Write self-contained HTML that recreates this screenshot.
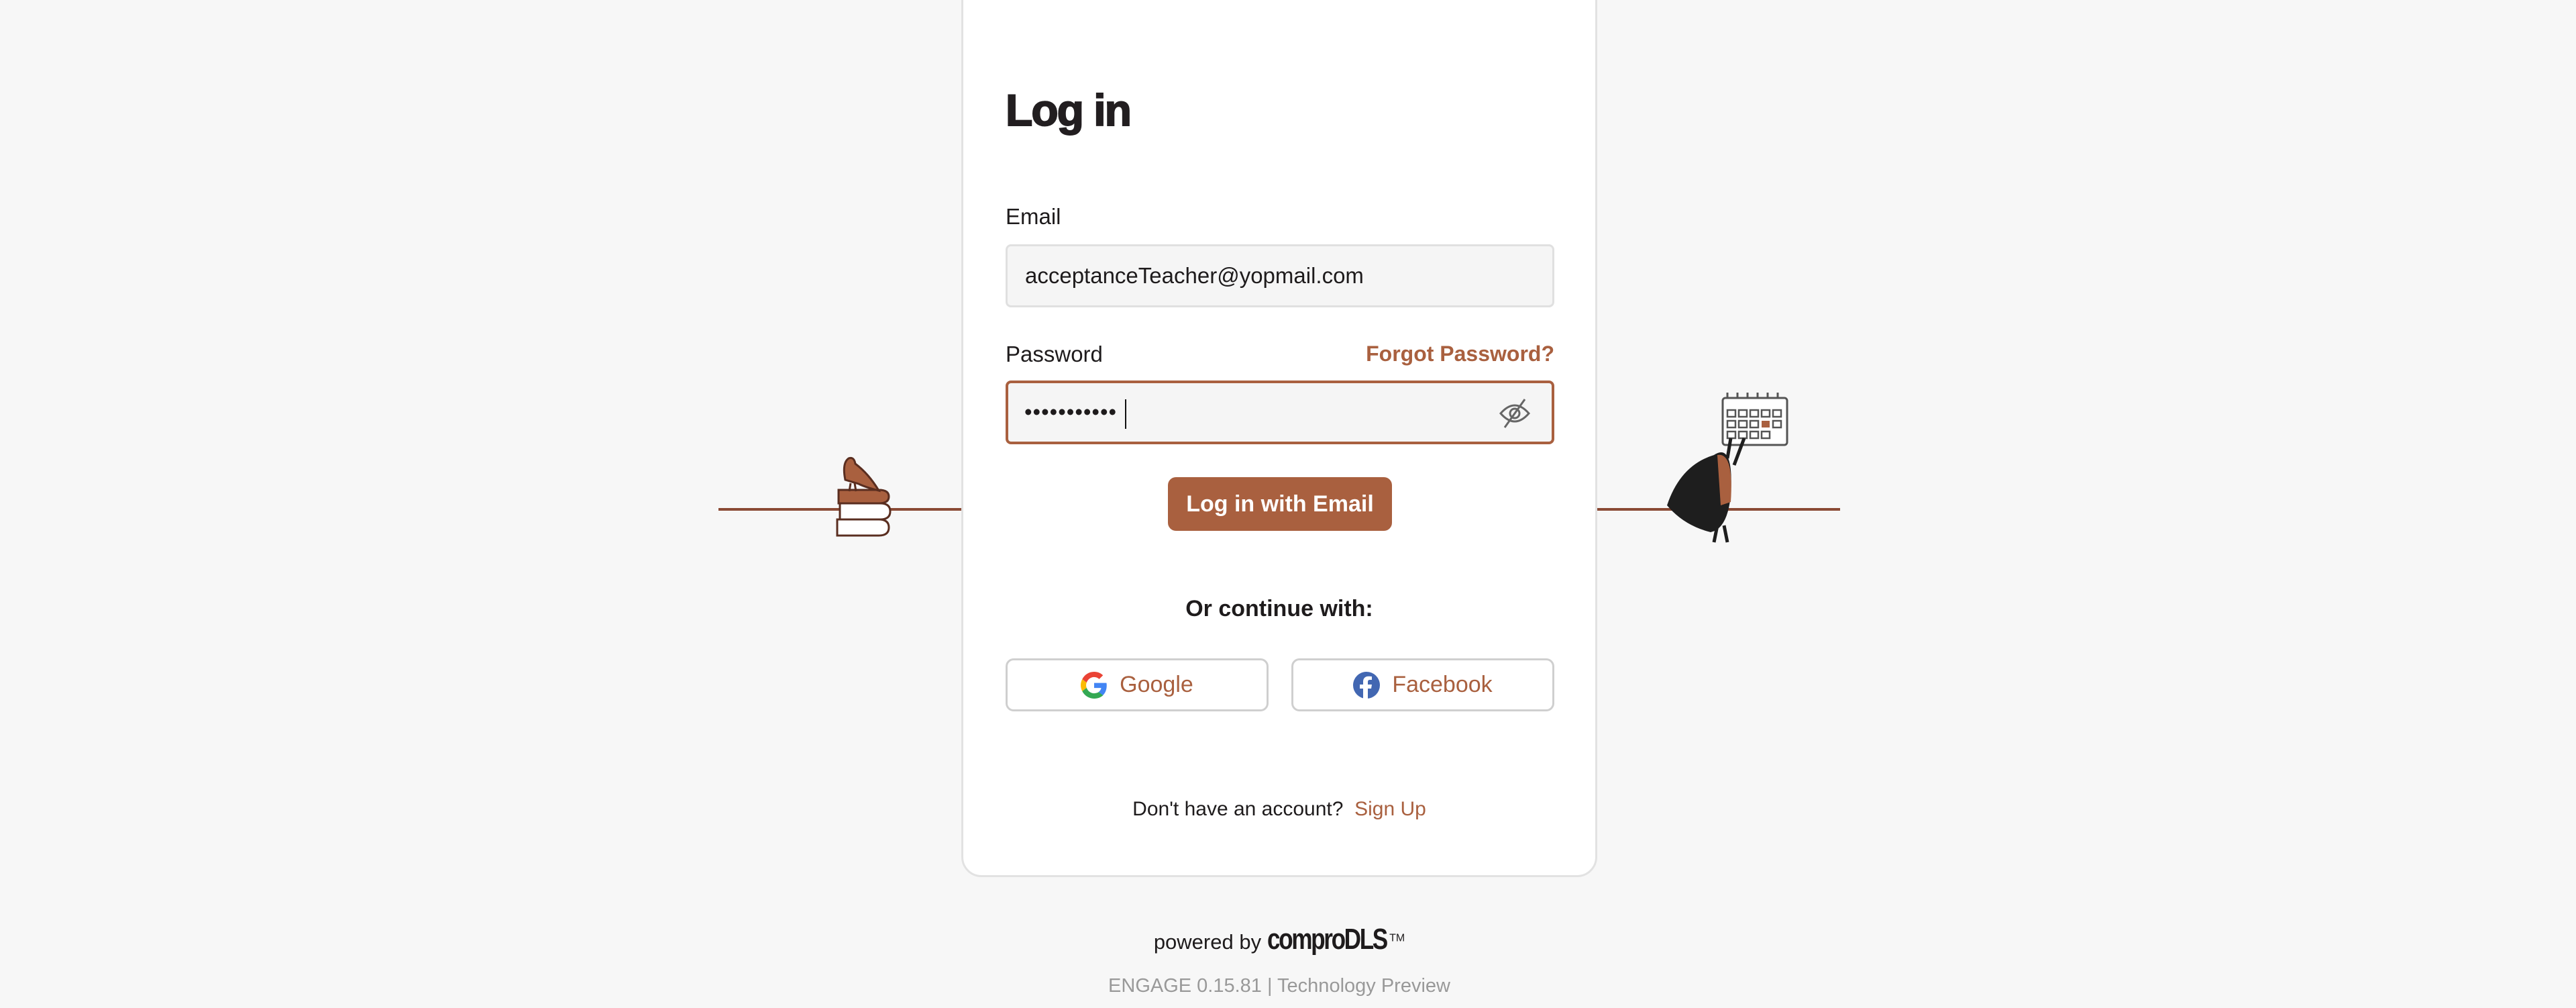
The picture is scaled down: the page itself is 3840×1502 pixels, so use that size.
<!DOCTYPE html>
<html><head><meta charset="utf-8"><style>
*{box-sizing:border-box;margin:0;padding:0}
body{width:3840px;height:1502px;background:#f7f7f7;font-family:"Liberation Sans",sans-serif;position:relative;overflow:hidden;color:#1e1b1c}
.card{position:absolute;left:1433px;top:-40px;width:948px;height:1347px;background:#fff;border:3px solid #e2e2e2;border-radius:30px}
.abs{position:absolute}
.line{position:absolute;top:757px;height:4px;background:#8a4a35}
h1{position:absolute;left:1499px;top:126px;font-size:66px;font-weight:900;letter-spacing:-2px;color:#221e20;-webkit-text-stroke:2px #221e20}
.lbl{position:absolute;font-size:33px}
.inp{position:absolute;left:1499px;width:818px;background:#f5f5f5;border:3px solid #e0e0e0;border-radius:8px}
.btn{position:absolute;left:1741px;top:711px;width:334px;height:80px;background:#a9603f;border-radius:12px;color:#fff;font-size:34px;font-weight:bold;text-align:center;line-height:80px}
.soc{position:absolute;top:981px;width:392px;height:79px;border:3px solid #cfcfcf;border-radius:12px;display:flex;align-items:center;justify-content:center;gap:18px;color:#a9603f;font-size:34px}
</style></head><body>
<div class="line" style="left:1071px;width:362px"></div>
<div class="line" style="left:2381px;width:362px"></div>
<svg class="abs" style="left:1240px;top:675px" width="120" height="125" viewBox="0 0 120 125">
<g stroke="#5a2e20" stroke-width="3" fill="#fff">
<path d="M10 55 h60 q15 0 15 10 q0 10 -15 10 h-60z" fill="#a9603f"/>
<path d="M12 75 h60 q15 0 15 12 q0 12 -15 12 h-60z"/>
<path d="M8 99 h62 q15 0 15 12 q0 12 -15 12 h-62z"/>
<path d="M20 40 q-5 -25 5 -32 q8 -3 10 8 q20 15 35 40 q-20 -5 -30 -10z" fill="#a9603f"/>
<path d="M28 45 l-2 12 M34 45 l2 12"/>
</g></svg>
<svg class="abs" style="left:2465px;top:583px" width="210" height="230" viewBox="0 0 210 230">
<rect x="103" y="10" width="96" height="70" rx="4" fill="#fff" stroke="#555" stroke-width="3"/>
<g fill="none" stroke="#555" stroke-width="2.5">
<rect x="110" y="28" width="12" height="10"/><rect x="127" y="28" width="12" height="10"/><rect x="144" y="28" width="12" height="10"/><rect x="161" y="28" width="12" height="10"/><rect x="178" y="28" width="12" height="10"/>
<rect x="110" y="44" width="12" height="10"/><rect x="127" y="44" width="12" height="10"/><rect x="144" y="44" width="12" height="10"/><rect x="178" y="44" width="12" height="10"/>
<rect x="110" y="60" width="12" height="10"/><rect x="127" y="60" width="12" height="10"/><rect x="144" y="60" width="12" height="10"/><rect x="161" y="60" width="12" height="10"/>
</g><rect x="161" y="44" width="12" height="10" fill="#a9603f"/>
<path d="M110 10 v-8 M125 10 v-8 M140 10 v-8 M155 10 v-8 M170 10 v-8 M185 10 v-8" stroke="#555" stroke-width="3"/>
<path d="M90 95 q30 -20 25 60 q-5 50 -30 55 q-40 -10 -65 -40 q20 -60 70 -75z" fill="#1e1e1e"/>
<path d="M95 95 q25 -5 20 70 l-15 5z" fill="#a9603f"/>
<path d="M110 100 l5 -30 M120 110 l15 -40 M95 200 l-5 25 M105 200 l5 25" stroke="#1e1e1e" stroke-width="5" fill="none"/>
</svg>
<div class="card"></div>
<h1>Log in</h1>
<div class="lbl" style="left:1499px;top:304px">Email</div>
<div class="inp" style="top:364px;height:94px"><span class="abs" style="left:26px;top:25px;font-size:33px">acceptanceTeacher@yopmail.com</span></div>
<div class="lbl" style="left:1499px;top:509px">Password</div>
<div class="lbl" style="right:1523px;top:509px;color:#a9603f;font-weight:bold;font-size:32px">Forgot Password?</div>
<div class="inp" style="top:567px;height:95px;border:4px solid #a9603f"><span class="abs" style="left:24px;top:24px;font-size:33px;letter-spacing:1px">•••••••••••</span><span class="abs" style="left:174px;top:24px;width:2px;height:44px;background:#111"></span>
<svg class="abs" style="left:730px;top:22px" width="50" height="46" viewBox="0 0 50 46" fill="none" stroke="#666" stroke-width="3"><path d="M4 23 q21 -24 42 0 q-21 24 -42 0z"/><circle cx="25" cy="23" r="7"/><path d="M10 44 L40 2"/></svg></div>
<div class="btn">Log in with Email</div>
<div class="abs" style="left:1433px;width:948px;top:888px;text-align:center;font-size:34px;font-weight:bold">Or continue with:</div>
<div class="soc" style="left:1499px"><svg width="40" height="40" viewBox="0 0 48 48"><path fill="#EA4335" d="M24 9.5c3.5 0 6.6 1.2 9.1 3.6l6.8-6.8C35.8 2.4 30.3 0 24 0 14.6 0 6.6 5.4 2.7 13.3l7.9 6.1C12.5 13.7 17.8 9.5 24 9.5z"/><path fill="#4285F4" d="M46.5 24.5c0-1.6-.1-3.1-.4-4.5H24v9h12.7c-.6 2.9-2.2 5.4-4.7 7.1l7.7 6c4.5-4.2 6.8-10.3 6.8-17.6z"/><path fill="#FBBC05" d="M10.5 28.6c-.5-1.4-.8-3-.8-4.6s.3-3.2.8-4.6l-7.9-6.1C1 16.5 0 20.1 0 24s1 7.5 2.7 10.7l7.8-6.1z"/><path fill="#34A853" d="M24 48c6.5 0 11.9-2.1 15.9-5.8l-7.7-6c-2.2 1.5-5 2.3-8.2 2.3-6.2 0-11.5-4.2-13.4-9.9l-7.9 6.1C6.6 42.6 14.6 48 24 48z"/></svg>Google</div>
<div class="soc" style="left:1925px"><svg width="40" height="40" viewBox="0 0 40 40"><circle cx="20" cy="20" r="20" fill="#4267b2"/><path d="M22 40V25h5l1-6h-6v-4c0-2 1-3 3-3h3V7c-1 0-3-.3-5-.3-5 0-8 3-8 8V19h-5v6h5v15z" fill="#fff"/></svg>Facebook</div>
<div class="abs" style="left:1433px;width:948px;top:1189px;text-align:center;font-size:30px">Don't have an account?&nbsp; <span style="color:#a9603f">Sign Up</span></div>
<div class="abs" style="left:0;width:3814px;top:1375px;text-align:center;font-size:31px">powered by <span style="display:inline-block;font-size:44px;font-weight:bold;letter-spacing:-3px;transform:scaleX(0.8);transform-origin:left;margin-right:-40px">comproDLS</span><sup style="font-size:16px">TM</sup></div>
<div class="abs" style="left:0;width:3814px;top:1453px;text-align:center;font-size:29px;color:#999">ENGAGE 0.15.81 | Technology Preview</div>
</body></html>
